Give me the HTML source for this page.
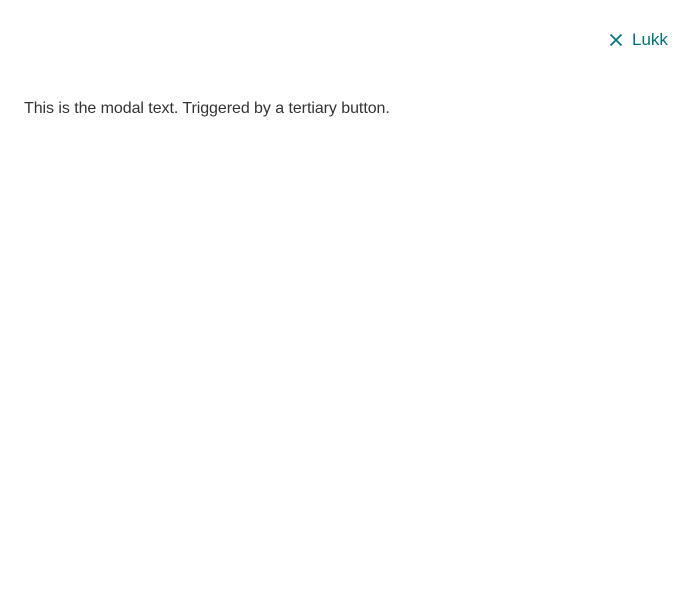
<!DOCTYPE html>
<html><head><style>
body{margin:0;width:700px;height:600px;background:#fff;font-family:"Liberation Sans",sans-serif;}
.close{position:absolute;left:609px;top:30px;display:flex;align-items:center;color:#00737a;font-size:17px;}
.close svg{margin-right:9px}
p{position:absolute;left:24px;top:100px;margin:0;font-size:16px;color:#333;letter-spacing:-0.06px}
</style></head><body>
<div class="close"><svg width="14" height="14" viewBox="0 0 14 14"><path d="M1.5 1.5L12.5 12.5M12.5 1.5L1.5 12.5" stroke="#00737a" stroke-width="1.7"/></svg>Lukk</div>
<p>This is the modal text. Triggered by a tertiary button.</p>
</body></html>
